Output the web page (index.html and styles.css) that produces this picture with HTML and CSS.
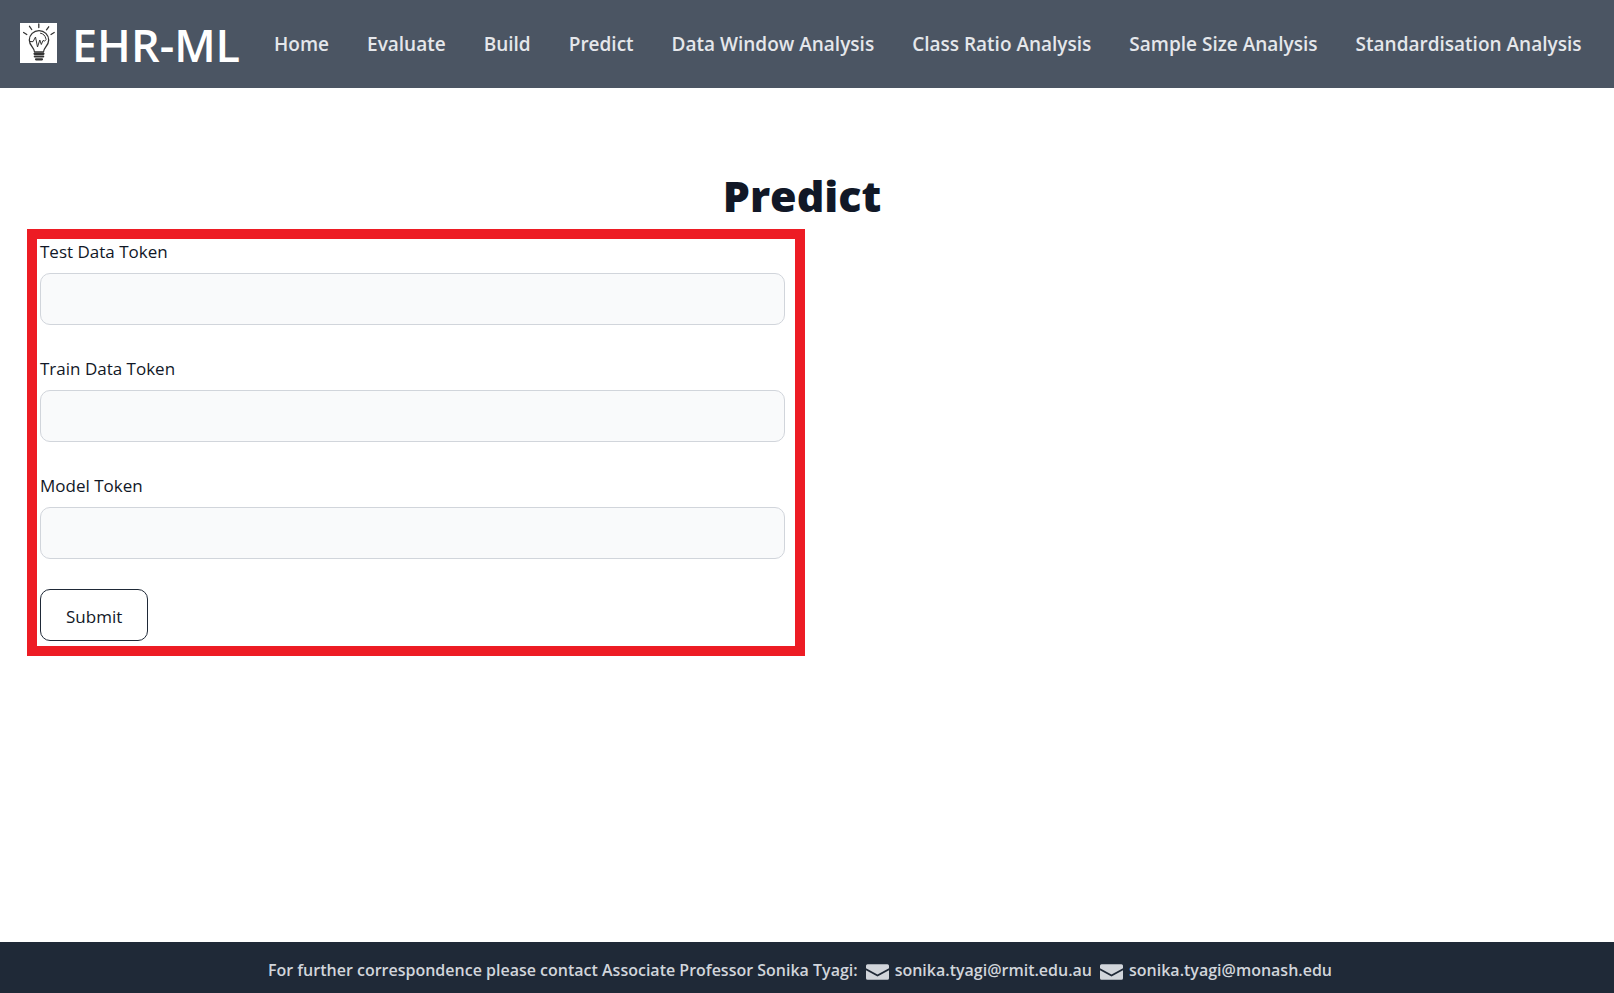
FILE: index.html
```html
<!DOCTYPE html>
<html lang="en">
<head>
<meta charset="utf-8">
<meta name="viewport" content="width=device-width, initial-scale=1">
<title>EHR-ML - Predict</title>
<link rel="stylesheet" href="styles.css">
</head>
<body>
<header class="header">
  <a class="brand" href="#">
    <svg class="brand-logo" viewBox="0 0 37 40" aria-hidden="true">
      <rect width="37" height="40" fill="#fff"/>
      <g fill="none" stroke="#333" stroke-linecap="round" stroke-linejoin="round">
        <path stroke-width="1.3" d="M18.8 1v3.600M9.500 3.300l2.200 3.200M28.700 3.800l-2.200 3M3.600 9.500l3.200 2M34.200 9.500l-3.200 2"/>
        <path stroke-width="1.300" d="M14.500 29c0-4.500-5.200-6-5.200-12a9.700 9.400 0 0 1 19.400 0c0 6-5.200 7.500-5.200 12z"/>
        <path stroke-width="1" d="M10 18.500l3 .2 2.500-4.700 2 10 2.300-7 1.500 4.500 1.700-4 1.500.5 1.800-1.500M20.500 10.200a6.500 6.500 0 0 1 5.300 5.300"/>
        <path stroke-width="2.200" d="M14.500 30.800h9M14.800 33.500h8.400M16 36.300h6"/>
      </g>
    </svg>
    <span class="brand-name">EHR-ML</span>
  </a>
  <nav class="nav">
    <a href="#">Home</a>
    <a href="#">Evaluate</a>
    <a href="#">Build</a>
    <a href="#">Predict</a>
    <a href="#">Data Window Analysis</a>
    <a href="#">Class Ratio Analysis</a>
    <a href="#">Sample Size Analysis</a>
    <a href="#">Standardisation Analysis</a>
  </nav>
</header>
<main class="main">
  <h1 class="title">Predict</h1>
  <div class="columns">
    <form class="form">
      <div class="field">
        <label for="test-token">Test Data Token</label>
        <input id="test-token" type="text">
      </div>
      <div class="field">
        <label for="train-token">Train Data Token</label>
        <input id="train-token" type="text">
      </div>
      <div class="field">
        <label for="model-token">Model Token</label>
        <input id="model-token" type="text">
      </div>
      <button class="submit" type="submit">Submit</button>
    </form>
  </div>
</main>
<footer class="footer">
  <span>For further correspondence please contact Associate Professor Sonika Tyagi:</span>
  <a class="mail" href="mailto:sonika.tyagi@rmit.edu.au">
    <svg class="mail-icon" viewBox="0 0 22 15" aria-hidden="true"><path d="M0 3.800V1.500Q0 0 1.500 0h19Q22 0 22 1.500v2.300l-11 6zM0 5.800l11 6 11-6v7.700q0 1.500-1.500 1.500h-19Q0 15 0 13.500z"/></svg>
    <span>sonika.tyagi@rmit.edu.au</span>
  </a>
  <a class="mail" href="mailto:sonika.tyagi@monash.edu">
    <svg class="mail-icon" viewBox="0 0 22 15" aria-hidden="true"><path d="M0 3.800V1.500Q0 0 1.500 0h19Q22 0 22 1.500v2.300l-11 6zM0 5.800l11 6 11-6v7.700q0 1.500-1.500 1.500h-19Q0 15 0 13.500z"/></svg>
    <span>sonika.tyagi@monash.edu</span>
  </a>
</footer>
</body>
</html>
```
FILE: styles.css
```css
*, *::before, *::after { box-sizing: border-box; }

body {
  margin: 0;
  min-height: 100vh;
  display: flex;
  flex-direction: column;
  background: #fff;
  color: #111827;
  font-family: "Segoe UI", "Open Sans", "Noto Sans", sans-serif;
  font-size: 17px;
}

a { color: inherit; text-decoration: none; }

.header {
  display: flex;
  align-items: center;
  gap: 34px;
  min-height: 88px;
  padding: 0 20px;
  background: #4b5563;
}

.brand {
  display: flex;
  align-items: center;
  gap: 15px;
  color: #fff;
}

.brand-logo { width: 37px; height: 40px; margin-bottom: 2px; }

.brand-name {
  padding-top: 2px;
  font-size: 45px;
  line-height: 48px;
  font-weight: 600;
}

.nav {
  display: flex;
  flex-wrap: wrap;
  column-gap: 38px;
  color: #e5e7eb;
  font-size: 19px;
  line-height: 28px;
  font-weight: 600;
}

.main {
  flex: 1;
  padding: 73px 50px 40px 40px;
}

.title {
  margin: 0 0 8px;
  text-align: center;
  font-size: 43px;
  line-height: 70px;
  font-weight: 800;
}

.columns {
  display: grid;
  grid-template-columns: 1fr 1fr;
  gap: 34px;
}

.form {
  margin: -10px -20px 0 -13px;
  padding: 0 10px 5px 3px;
  border: 10px solid #ed1c24;
}

.field { margin-bottom: 30px; }

.field label {
  display: block;
  padding-bottom: 8px;
  line-height: 26px;
  font-weight: 500;
}

.field + .field label { padding-top: 1px; }

.field input {
  display: block;
  width: 100%;
  height: 52px;
  padding: 0 12px;
  border: 1px solid #d1d5db;
  border-radius: 10px;
  background: #f9fafb;
  color: inherit;
  font: inherit;
}

.submit {
  display: block;
  height: 52px;
  padding: 3px 25px 0;
  border: 1px solid #1f2937;
  border-radius: 10px;
  background: #fff;
  color: #111827;
  font: inherit;
  font-weight: 500;
}

.footer {
  display: flex;
  flex-wrap: wrap;
  align-items: center;
  justify-content: center;
  gap: 8px;
  min-height: 51px;
  padding: 4px 28px 0 14px;
  background: #1f2937;
  color: #d1d5db;
  font-size: 16px;
  line-height: 24px;
  font-weight: 600;
}

.mail { display: flex; align-items: center; gap: 6px; }

.mail-icon { width: 23px; height: 16px; margin-top: 4px; fill: currentColor; }
```
